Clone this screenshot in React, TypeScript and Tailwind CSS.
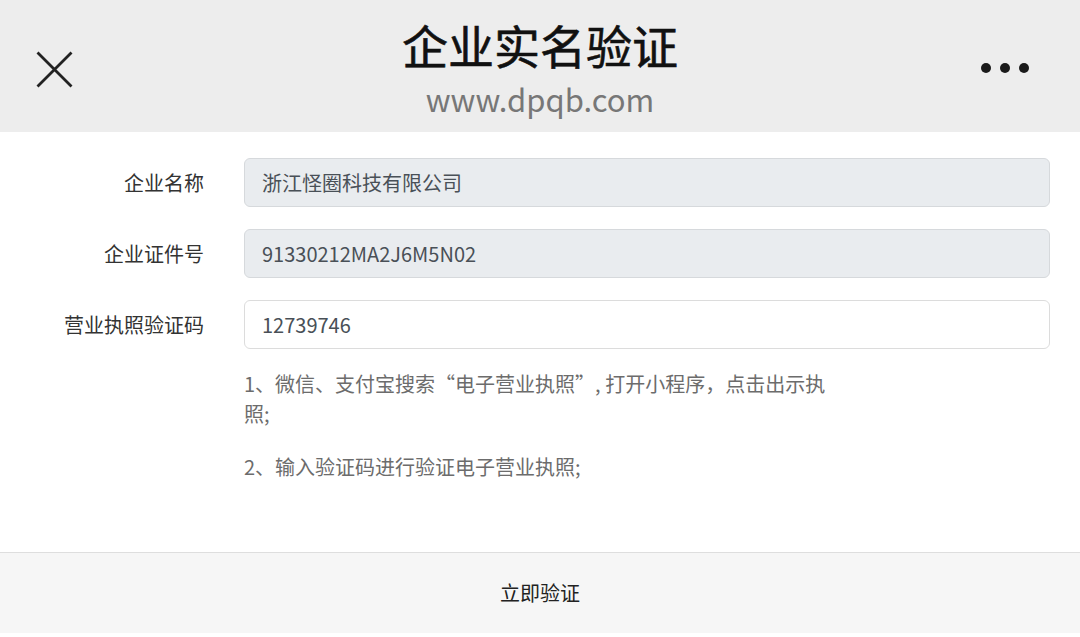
import { useState } from 'react'

export default function App() {
	const [code, setCode] = useState('12739746')

	return (
		<div
			className="flex h-[637px] w-[1080px] flex-col bg-white"
			style={{ fontFamily: '"Noto Sans CJK SC", "Noto Sans", sans-serif' }}
		>
			{/* top bar */}
			<div className="relative flex h-[132px] shrink-0 flex-col items-center bg-[#ededed] pt-[19px]">
				<button type="button" className="absolute left-[36px] top-[51px] h-[37px] w-[37px] text-[#222]">
					<svg viewBox="0 0 37 37" className="h-full w-full" fill="none" stroke="currentColor" strokeWidth="2.8">
						<path d="M1.5 1.5 L35.5 35.5 M35.5 1.5 L1.5 35.5" />
					</svg>
				</button>
				<h1
					className="text-[46px] font-normal leading-[50px] text-[#111]"
					style={{ WebkitTextStroke: '0.6px #111' }}
				>
					企业实名验证
				</h1>
				<p className="mt-[12px] text-[31px] leading-[36px] text-[#777]">www.dpqb.com</p>
				<div className="absolute right-[51px] top-[63px] flex gap-[9px]">
					<span className="h-[10px] w-[10px] rounded-full bg-[#1a1a1a]" />
					<span className="h-[10px] w-[10px] rounded-full bg-[#1a1a1a]" />
					<span className="h-[10px] w-[10px] rounded-full bg-[#1a1a1a]" />
				</div>
			</div>

			{/* form */}
			<div className="flex flex-1 flex-col gap-[22px] pt-[26px] pr-[30px]">
				<div className="flex items-center">
					<label className="w-[204px] shrink-0 text-right text-[20px] text-[#333]">企业名称</label>
					<input
						readOnly
						value="浙江怪圈科技有限公司"
						className="ml-[40px] h-[49px] flex-1 rounded-[6px] border border-[#d6d9dc] bg-[#e9ecef] px-[17px] text-[20px] text-[#495057] outline-none"
					/>
				</div>
				<div className="flex items-center">
					<label className="w-[204px] shrink-0 text-right text-[20px] text-[#333]">企业证件号</label>
					<input
						readOnly
						value="91330212MA2J6M5N02"
						className="ml-[40px] h-[49px] flex-1 rounded-[6px] border border-[#d6d9dc] bg-[#e9ecef] px-[17px] text-[20px] text-[#495057] outline-none"
					/>
				</div>
				<div className="flex items-center">
					<label className="w-[204px] shrink-0 text-right text-[20px] text-[#333]">营业执照验证码</label>
					<input
						value={code}
						onChange={(event) => setCode(event.target.value)}
						className="ml-[40px] h-[49px] flex-1 rounded-[6px] border border-[#dcdcdc] bg-white px-[17px] text-[20px] text-[#495057] outline-none"
					/>
				</div>

				<div className="-mt-[2px] ml-[244px] w-[590px] text-[20px] leading-[30px] text-[#6c6c6c]">
					<p>1、微信、支付宝搜索“电子营业执照”, 打开小程序，点击出示执照;</p>
					<p className="mt-[23px]">2、输入验证码进行验证电子营业执照;</p>
				</div>
			</div>

			{/* footer */}
			<div className="mb-[4px] flex h-[81px] shrink-0 items-center justify-center border-t border-[#dedede] bg-[#f6f6f6]">
				<button type="button" className="text-[20px] text-[#222]">
					立即验证
				</button>
			</div>
		</div>
	)
}
